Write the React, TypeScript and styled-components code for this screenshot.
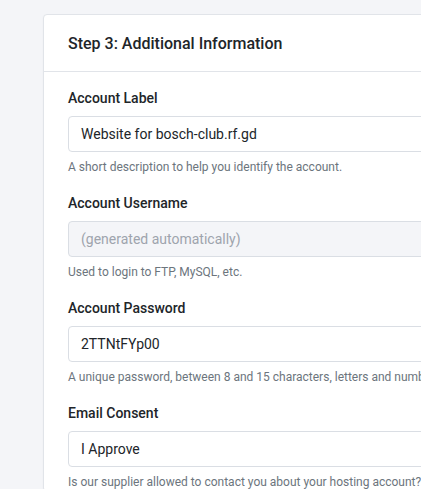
import React, { FC } from "react";
import styled, { createGlobalStyle } from "styled-components";

const GlobalStyle = createGlobalStyle`
  html, body {
    margin: 0;
    padding: 0;
    overflow: hidden;
    background: #f4f5f8;
    font-family: Roboto, "Liberation Sans", sans-serif;
  }
`;

interface FieldProps {
  label: string;
  value: string;
  help: string;
  disabled?: boolean;
}

const fields: FieldProps[] = [
  {
    label: "Account Label",
    value: "Website for bosch-club.rf.gd",
    help: "A short description to help you identify the account.",
  },
  {
    label: "Account Username",
    value: "(generated automatically)",
    help: "Used to login to FTP, MySQL, etc.",
    disabled: true,
  },
  {
    label: "Account Password",
    value: "2TTNtFYp00",
    help: "A unique password, between 8 and 15 characters, letters and numbers only.",
  },
  {
    label: "Email Consent",
    value: "I Approve",
    help: "Is our supplier allowed to contact you about your hosting account?",
  },
];

const Field: FC<FieldProps> = ({ label, value, help, disabled }) => (
  <FieldWrap>
    <Label>{label}</Label>
    <Input $disabled={disabled}>{value}</Input>
    <Help>{help}</Help>
  </FieldWrap>
);

const App: FC = () => (
  <>
    <GlobalStyle />
    <Page>
      <Card>
        <CardHeader>Step 3: Additional Information</CardHeader>
        <CardBody>
          {fields.map((f) => (
            <Field key={f.label} {...f} />
          ))}
        </CardBody>
      </Card>
    </Page>
  </>
);

const Page = styled.div`
  padding: 14px 0 0 43px;
  width: 700px;
`;

const Card = styled.section`
  width: 440px;
  background: #ffffff;
  border: 1px solid #e1e4e9;
  border-radius: 4px;
  box-shadow: 0 1px 2px rgb(0 20 61 / 4%);
`;

const CardHeader = styled.h2`
  margin: 0;
  height: 56px;
  display: flex;
  align-items: center;
  padding: 0 24px;
  border-bottom: 1px solid #e1e4e9;
  font-size: 16px;
  font-weight: 500;
  color: #212529;
`;

const CardBody = styled.div`
  padding: 16px 24px 0;
  display: flex;
  flex-direction: column;
  gap: 17px;
`;

const FieldWrap = styled.div`
  display: flex;
  flex-direction: column;
`;

const Label = styled.label`
  font-size: 14px;
  line-height: 20px;
  font-weight: 500;
  color: #212529;
  margin-bottom: 8px;
`;

const Input = styled.div<{ $disabled?: boolean }>`
  box-sizing: border-box;
  height: 36px;
  display: flex;
  align-items: center;
  padding: 0 12px;
  border: 1px solid #dadee4;
  border-radius: 4px;
  font-size: 14px;
  white-space: nowrap;
  color: ${(p) => (p.$disabled ? "#9ea4ad" : "#212529")};
  background: ${(p) => (p.$disabled ? "#f4f5f8" : "#ffffff")};
`;

const Help = styled.p`
  margin: 6px 0 0;
  font-size: 12px;
  line-height: 18px;
  color: #6c757d;
  white-space: nowrap;
`;

export default App;
